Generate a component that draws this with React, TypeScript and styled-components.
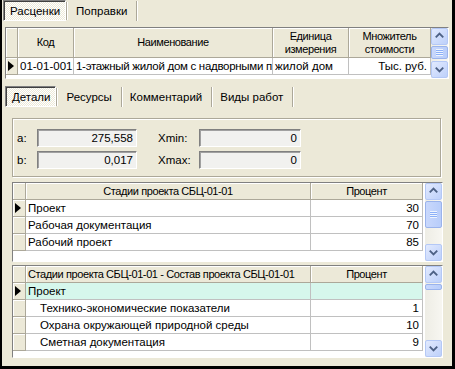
import React from "react";
import styled, { createGlobalStyle } from "styled-components";

const GlobalStyle = createGlobalStyle`
  body {
    margin: 0;
    background: #000;
    font-family: Tahoma, "Liberation Sans", Arial, sans-serif;
    font-size: 11.5px;
  }
`;

const dither = `
  background-color: #ece9d8;
  background-image: conic-gradient(#fff 25%, transparent 0 50%, #fff 0 75%, transparent 0);
  background-size: 2px 2px;
`;

function Chevron({ dir }: { dir: "up" | "down" }) {
  const d = dir === "up" ? "M4 9 L8 5 L12 9" : "M4 6 L8 10 L12 6";
  return (
    <svg width="15" height="15" viewBox="0 0 16 16">
      <path d={d} fill="none" stroke="#4d6185" strokeWidth="2" />
    </svg>
  );
}

function Scroll({ thumbTop, thumbHeight }: { thumbTop: number; thumbHeight: number }) {
  return (
    <ScrollBar>
      <ScrollBtn>
        <Chevron dir="up" />
      </ScrollBtn>
      <Track>
        <Thumb $top={thumbTop} $h={thumbHeight}>
          {thumbHeight > 10 && <Grip />}
        </Thumb>
      </Track>
      <ScrollBtn>
        <Chevron dir="down" />
      </ScrollBtn>
    </ScrollBar>
  );
}

type Row = { name: string; value?: string; current?: boolean; indent?: boolean; hl?: boolean };

function StageGrid({
  title,
  rows,
  headAlign,
  height,
  thumbTop,
  thumbHeight,
}: {
  title: string;
  rows: Row[];
  headAlign: "left" | "center";
  height: number;
  thumbTop: number;
  thumbHeight: number;
}) {
  return (
    <Grid $h={height}>
      <Table $cols="13px 285px 112px">
        <Ind />
        <Head $align={headAlign}>{title}</Head>
        <Head $align="center">Процент</Head>
        {rows.map((r) => (
          <React.Fragment key={r.name}>
            <Ind>{r.current && <Arrow />}</Ind>
            <Cell $hl={r.hl} $indent={r.indent ? 14 : 2}>
              {r.name}
            </Cell>
            <Cell $hl={r.hl} $align="right">
              {r.value}
            </Cell>
          </React.Fragment>
        ))}
      </Table>
      <Scroll thumbTop={thumbTop} thumbHeight={thumbHeight} />
    </Grid>
  );
}

export default function App() {
  return (
    <>
      <GlobalStyle />
      <Frame>
        <Window>
          <Tabs $left={1}>
            <Tab $active>Расценки</Tab>
            <Tab>Поправки</Tab>
          </Tabs>
          <TopArea>
            <Grid $h={52} $wide>
              <Table $cols="12px 56px 199px 76px 82px" $headH={30}>
                <Ind />
                <Head $align="center">Код</Head>
                <Head $align="center">Наименование</Head>
                <Head $align="center">
                  Единица
                  <br />
                  измерения
                </Head>
                <Head $align="center">
                  Множитель
                  <br />
                  стоимости
                </Head>
                <Ind>
                  <Arrow />
                </Ind>
                <Cell $indent={2}>01-01-001</Cell>
                <Cell $indent={2} $tight>
                  1-этажный жилой дом с надворными п
                </Cell>
                <Cell $indent={2}>жилой дом</Cell>
                <Cell $align="right">Тыс. руб.</Cell>
              </Table>
              <Scroll thumbTop={1} thumbHeight={13} />
            </Grid>
          </TopArea>
          <Tabs $left={3} $top={7}>
            <Tab $active>Детали</Tab>
            <Tab>Ресурсы</Tab>
            <Tab>Комментарий</Tab>
            <Tab>Виды работ</Tab>
          </Tabs>
          <Sheet>
            <GroupBox>
              <Label>a:</Label>
              <Field>275,558</Field>
              <Label $gap>Xmin:</Label>
              <Field>0</Field>
              <Label>b:</Label>
              <Field>0,017</Field>
              <Label $gap>Xmax:</Label>
              <Field>0</Field>
            </GroupBox>
            <StageGrid
              title="Стадии проекта СБЦ-01-01"
              headAlign="center"
              height={80}
              thumbTop={1}
              thumbHeight={27}
              rows={[
                { name: "Проект", value: "30", current: true },
                { name: "Рабочая документация", value: "70" },
                { name: "Рабочий проект", value: "85" },
              ]}
            />
            <StageGrid
              title="Стадии проекта СБЦ-01-01 - Состав проекта СБЦ-01-01"
              headAlign="left"
              height={93}
              thumbTop={1}
              thumbHeight={6}
              rows={[
                { name: "Проект", current: true, hl: true },
                { name: "Технико-экономические показатели", value: "1", indent: true },
                { name: "Охрана окружающей природной среды", value: "10", indent: true },
                { name: "Сметная документация", value: "9", indent: true },
              ]}
            />
          </Sheet>
        </Window>
      </Frame>
    </>
  );
}

const Frame = styled.div`
  width: 455px;
  height: 369px;
  padding: 0 3px 3px 2px;
  box-sizing: border-box;
  background: #000;
`;

const Window = styled.div`
  height: 100%;
  background: #ece9d8;
  color: #000;
  display: flex;
  flex-direction: column;
`;

const Tabs = styled.div<{ $left: number; $top?: number }>`
  display: flex;
  height: 21px;
  padding-left: ${(p) => p.$left}px;
  margin-top: ${(p) => p.$top ?? 0}px;
`;

const Tab = styled.div<{ $active?: boolean }>`
  display: flex;
  align-items: center;
  padding: 1px 8px 0 7px;
  margin-right: 3px;
  position: relative;
  box-sizing: border-box;
  ${(p) =>
    p.$active
      ? `${dither}
    border: 1px solid;
    border-color: #808080 #fff #fff #808080;
    box-shadow: inset 1px 1px 0 #404040;
    padding: 1px 5px 0 6px;`
      : ``}
  &::after {
    content: "";
    position: absolute;
    right: -3px;
    top: 1px;
    bottom: 0;
    width: 1px;
    background: #aca899;
    border-right: 1px solid #fff;
  }
`;

const TopArea = styled.div`
  padding: 6px 0 0 3px;
`;

const Sheet = styled.div`
  padding: 11px 0 0 10px;
  display: flex;
  flex-direction: column;
  gap: 4px;
`;

const Grid = styled.div<{ $h: number; $wide?: boolean }>`
  display: flex;
  width: ${(p) => (p.$wide ? 444 : 431)}px;
  height: ${(p) => p.$h}px;
  box-sizing: border-box;
  border: 1px solid;
  border-color: #808080 #fff #fff #808080;
  background: #fff;
  & + & {
    margin-top: -1px;
  }
`;

const Table = styled.div<{ $cols: string; $headH?: number }>`
  flex: 1;
  display: grid;
  grid-template-columns: ${(p) => p.$cols};
  grid-auto-rows: 17px;
  grid-template-rows: ${(p) => p.$headH ?? 17}px;
  align-content: start;
  overflow: hidden;
`;

const Head = styled.div<{ $align: "left" | "center" }>`
  display: flex;
  flex-direction: column;
  justify-content: center;
  text-align: ${(p) => p.$align};
  padding: 0 2px;
  background: #ece9d8;
  border-right: 1px solid #aca899;
  border-bottom: 1px solid #aca899;
  box-shadow: inset 1px 1px 0 #fff;
  white-space: nowrap;
  font-size: 11px;
  letter-spacing: -0.4px;
  line-height: 13px;
  overflow: hidden;
`;

const Ind = styled.div`
  background: #ece9d8;
  border-right: 1px solid #aca899;
  border-bottom: 1px solid #aca899;
  box-shadow: inset 1px 1px 0 #fff;
  display: flex;
  align-items: center;
  padding-left: 2px;
`;

const Arrow = styled.span`
  width: 0;
  height: 0;
  border-top: 5px solid transparent;
  border-bottom: 5px solid transparent;
  border-left: 6px solid #000;
`;

const Cell = styled.div<{ $align?: "right"; $indent?: number; $hl?: boolean; $tight?: boolean }>`
  background: ${(p) => (p.$hl ? "#d6f7ec" : "#fff")};
  border-right: 1px solid #c0c0c0;
  border-bottom: 1px solid #c0c0c0;
  text-align: ${(p) => p.$align ?? "left"};
  padding: 1px ${(p) => (p.$align === "right" ? 3 : 0)}px 0 ${(p) => p.$indent ?? 0}px;
  white-space: nowrap;
  overflow: hidden;
  text-overflow: clip;
  line-height: 15px;
  letter-spacing: ${(p) => (p.$tight ? "-0.3px" : "normal")};
`;

const ScrollBar = styled.div`
  width: 17px;
  display: flex;
  flex-direction: column;
  background: linear-gradient(90deg, #eeede5, #f7f6f1);
  flex-shrink: 0;
`;

const ScrollBtn = styled.div`
  height: 17px;
  box-sizing: border-box;
  border: 1px solid #b4c8f6;
  border-radius: 2px;
  background: linear-gradient(135deg, #e2eafe, #bdd0fa);
  display: flex;
  align-items: center;
  justify-content: center;
  flex-shrink: 0;
`;

const Track = styled.div`
  flex: 1;
  display: flex;
  flex-direction: column;
`;

const Thumb = styled.div<{ $top: number; $h: number }>`
  margin-top: ${(p) => p.$top}px;
  height: ${(p) => p.$h}px;
  box-sizing: border-box;
  border: 1px solid #9ab3ec;
  border-radius: 2px;
  background: linear-gradient(90deg, #c9d8fc, #b8cdfa);
  display: flex;
  align-items: center;
  justify-content: center;
`;

const Grip = styled.div`
  width: 7px;
  height: 7px;
  background: repeating-linear-gradient(#eef4fe 0 1px, #8cb0f8 1px 2px);
`;

const GroupBox = styled.div`
  display: grid;
  grid-template-columns: 20px 100px 62px 102px;
  grid-template-rows: 18px 18px;
  row-gap: 4px;
  align-items: center;
  width: 429px;
  height: 59px;
  box-sizing: border-box;
  padding: 10px 0 0 4px;
  border: 1px solid #aca899;
  box-shadow: inset 1px 1px 0 #fff, 1px 1px 0 #fff;
  margin-bottom: 1px;
`;

const Label = styled.div<{ $gap?: boolean }>`
  padding-left: ${(p) => (p.$gap ? 21 : 0)}px;
`;

const Field = styled.div`
  height: 18px;
  box-sizing: border-box;
  border: 1px solid;
  border-color: #808080 #fff #fff #808080;
  box-shadow: inset 1px 1px 0 #a0a0a0;
  background: #f1f1ef;
  text-align: right;
  padding: 2px 3px 0 0;
`;
